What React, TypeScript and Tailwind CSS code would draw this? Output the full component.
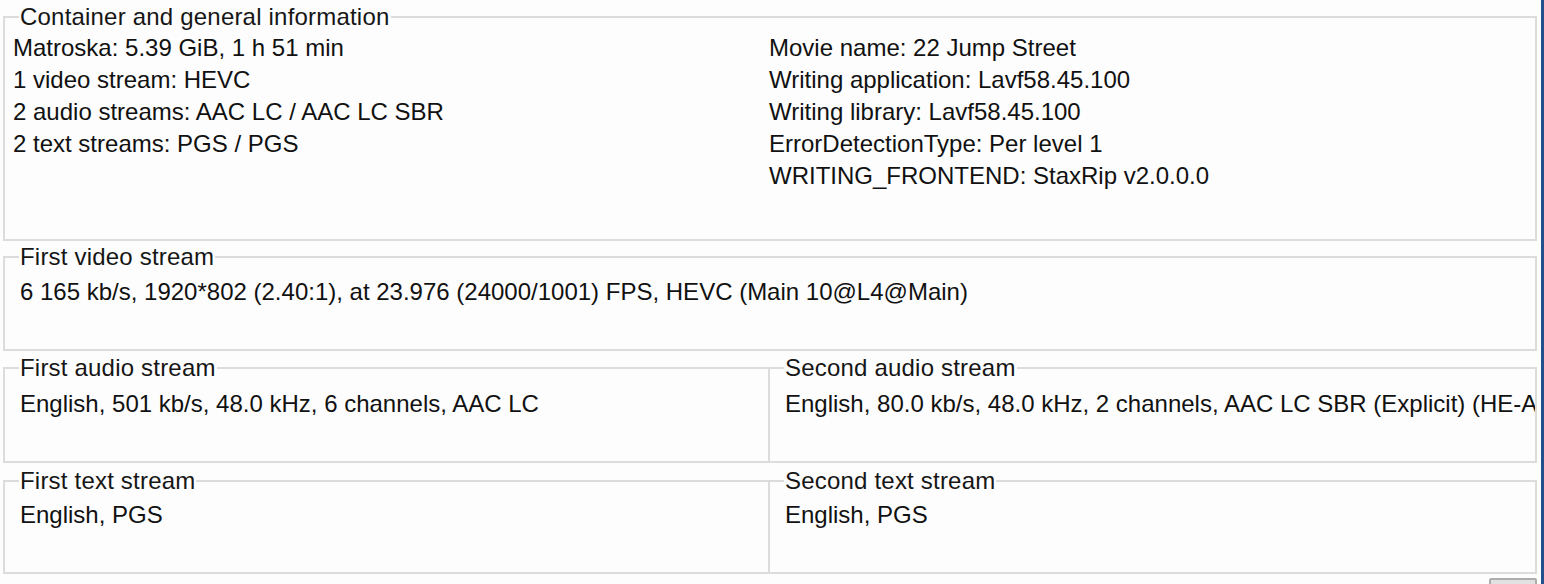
import React from "react";

const font = { fontFamily: '"Liberation Sans", Arial, sans-serif' };

function GroupBox({
  title,
  className = "",
  children,
}: {
  title: string;
  className?: string;
  children?: React.ReactNode;
}) {
  return (
    <fieldset className={`min-w-0 shrink-0 border-2 border-[#dcdcdc] bg-[#fdfdfd] px-0 ${className}`}>
      <legend className="ml-[14px] px-[1px] text-[24px] leading-[24px] tracking-[0.2px] text-[#161616]">
        {title}
      </legend>
      {children}
    </fieldset>
  );
}

function Line({ children }: { children: React.ReactNode }) {
  return <div className="whitespace-nowrap text-[24px] leading-[32px] text-[#111]">{children}</div>;
}

export default function App() {
  return (
    <div style={font} className="flex h-[584px] w-[1544px] overflow-hidden bg-[#fdfdfd]">
      <div className="flex flex-1 flex-col pl-[3px] pr-[4px] pt-[5px]">
        <GroupBox title="Container and general information" className="h-[236px]">
          <div className="grid grid-cols-2 pl-[8px] pr-[10px] pt-[3px]">
            <div>
              <Line>Matroska: 5.39 GiB, 1 h 51 min</Line>
              <Line>1 video stream: HEVC</Line>
              <Line>2 audio streams: AAC LC / AAC LC SBR</Line>
              <Line>2 text streams: PGS / PGS</Line>
            </div>
            <div>
              <Line>Movie name: 22 Jump Street</Line>
              <Line>Writing application: Lavf58.45.100</Line>
              <Line>Writing library: Lavf58.45.100</Line>
              <Line>ErrorDetectionType: Per level 1</Line>
              <Line>WRITING_FRONTEND: StaxRip v2.0.0.0</Line>
            </div>
          </div>
        </GroupBox>

        <GroupBox title="First video stream" className="mt-[4px] h-[106px]">
          <div className="px-[15px] pt-[7px]">
            <Line>6 165 kb/s, 1920*802 (2.40:1), at 23.976 (24000/1001) FPS, HEVC (Main 10@L4@Main)</Line>
          </div>
        </GroupBox>

        <div className="mt-[5px] grid h-[107px] shrink-0 grid-cols-2">
          <GroupBox title="First audio stream" className="h-full">
            <div className="px-[15px] pt-[8px]">
              <Line>English, 501 kb/s, 48.0 kHz, 6 channels, AAC LC</Line>
            </div>
          </GroupBox>
          <GroupBox title="Second audio stream" className="h-full border-l-0">
            <div className="overflow-hidden px-[15px] pt-[8px]">
              <Line>English, 80.0 kb/s, 48.0 kHz, 2 channels, AAC LC SBR (Explicit) (HE-AAC / LC)</Line>
            </div>
          </GroupBox>
        </div>

        <div className="mt-[6px] grid h-[105px] shrink-0 grid-cols-2">
          <GroupBox title="First text stream" className="h-full">
            <div className="px-[15px] pt-[6px]">
              <Line>English, PGS</Line>
            </div>
          </GroupBox>
          <GroupBox title="Second text stream" className="h-full border-l-0">
            <div className="px-[15px] pt-[6px]">
              <Line>English, PGS</Line>
            </div>
          </GroupBox>
        </div>

        <div className="mt-[4px] flex shrink-0 justify-end">
          <div className="h-[20px] w-[48px] rounded-[2px] border-2 border-[#adadad] bg-[#e1e1e1]" />
        </div>
      </div>
      <div className="w-[3px] shrink-0 bg-[#24508c]" />
    </div>
  );
}
